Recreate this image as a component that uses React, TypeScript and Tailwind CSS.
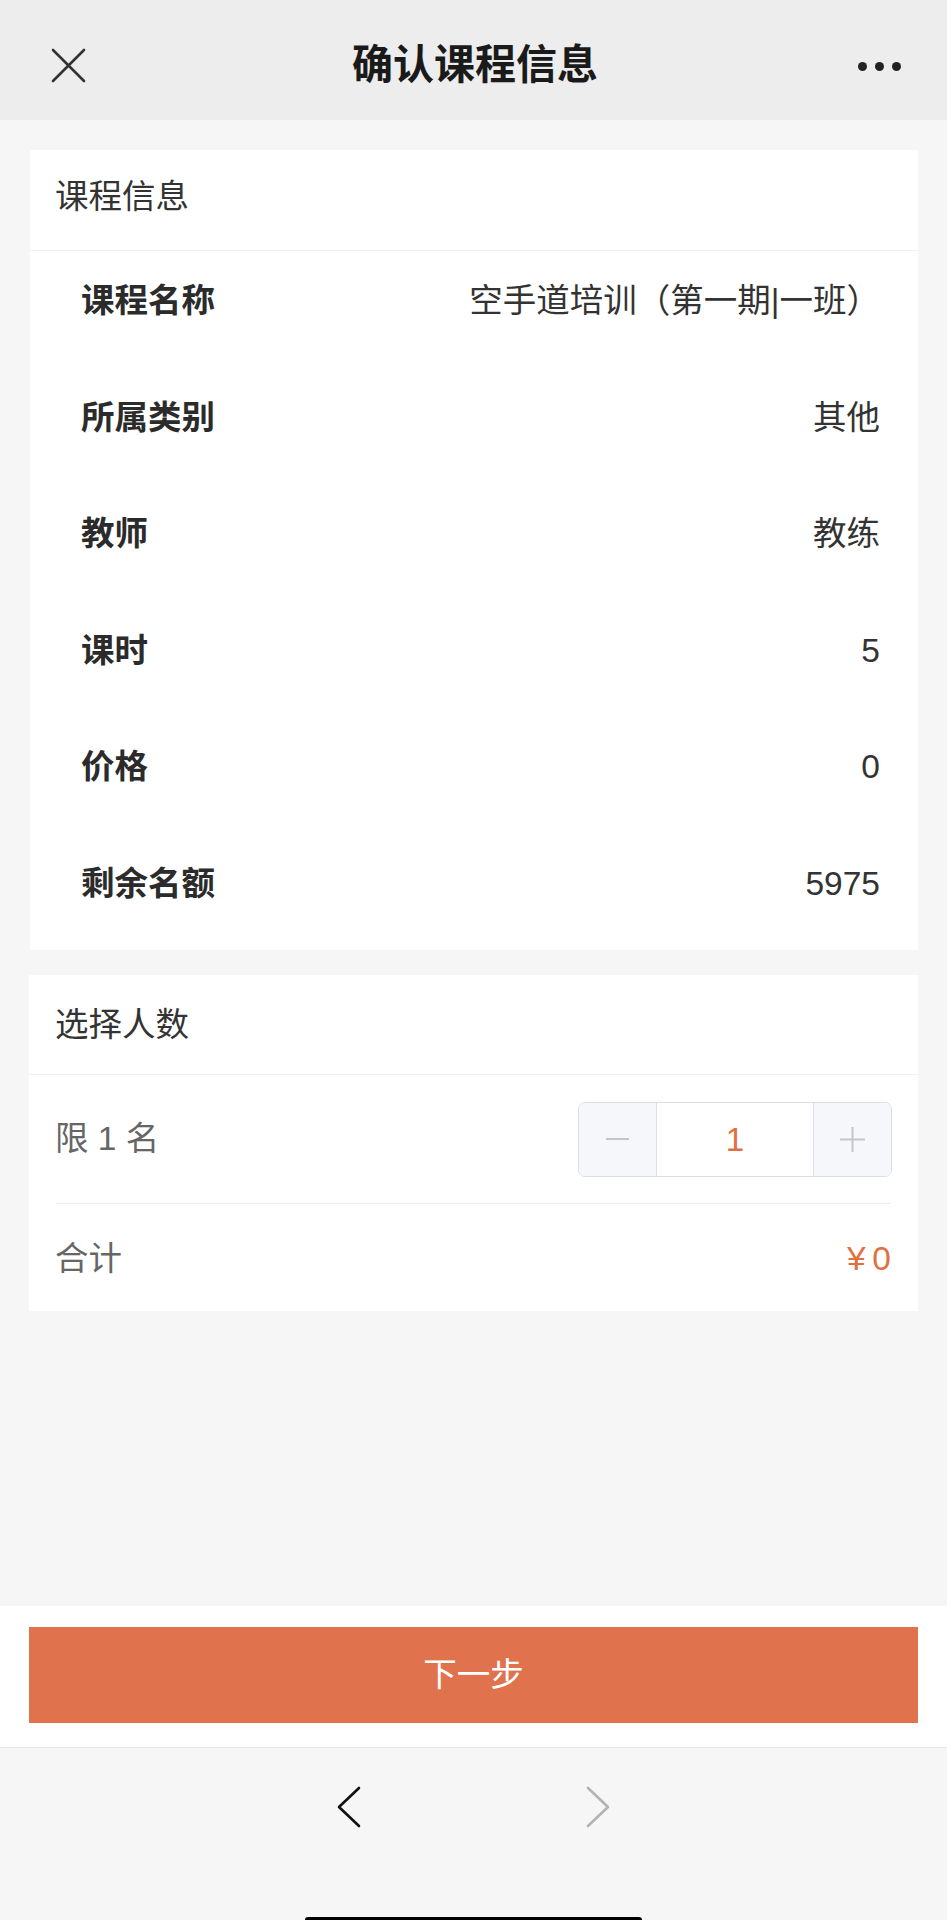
import React from "react";

const font = { fontFamily: '"Liberation Sans", "Noto Sans CJK SC", "Noto Sans", sans-serif' };

type Row = { label: string; value: string };

const rows: Row[] = [
  { label: "课程名称", value: "空手道培训（第一期|一班）" },
  { label: "所属类别", value: "其他" },
  { label: "教师", value: "教练" },
  { label: "课时", value: "5" },
  { label: "价格", value: "0" },
  { label: "剩余名额", value: "5975" },
];

const InfoRow: React.FC<Row> = ({ label, value }) => (
  <div className="flex h-[116.5px] items-start justify-between pl-[51px] pr-[38px] pt-[33px]">
    <span className="text-[33.5px] leading-[33px] font-bold text-[#2b2b2b]">{label}</span>
    <span className="text-[33.5px] leading-[33px] text-[#333333]">{value}</span>
  </div>
);

export default function App() {
  return (
    <div className="flex h-[1920px] w-full flex-col overflow-hidden bg-[#f6f6f6]" style={font}>
      {/* top bar */}
      <div className="flex h-[120px] shrink-0 items-center justify-between bg-[#ededed] pl-[51px] pr-[46px] pt-[11px]">
        <svg width="35" height="35" viewBox="0 0 35 35" className="text-[#333]">
          <path d="M2 2 L33 33 M33 2 L2 33" stroke="currentColor" strokeWidth="2.6" strokeLinecap="round" />
        </svg>
        <h1 className="ml-[6px] text-[41px] leading-none font-bold text-[#1a1a1a]">确认课程信息</h1>
        <div className="flex items-center gap-[8px] pt-[2px]">
          <span className="h-[9px] w-[9px] rounded-full bg-[#222]" />
          <span className="h-[9px] w-[9px] rounded-full bg-[#222]" />
          <span className="h-[9px] w-[9px] rounded-full bg-[#222]" />
        </div>
      </div>

      {/* content */}
      <div className="flex flex-1 flex-col gap-[25px] pt-[30px]">
        <div className="ml-[30px] mr-[29px] bg-white">
          <div className="flex h-[101px] items-center border-b border-[#f2f2f2] pl-[25px] pb-[6px]">
            <span className="text-[33.5px] leading-none text-[#333]">课程信息</span>
          </div>
          {rows.map((r) => (
            <InfoRow key={r.label} label={r.label} value={r.value} />
          ))}
        </div>

        <div className="ml-[29px] mr-[29px] bg-white">
          <div className="flex h-[100px] items-center border-b border-[#f2f2f2] pl-[26px]">
            <span className="text-[33.5px] leading-none text-[#333]">选择人数</span>
          </div>
          <div className="flex h-[128px] items-center justify-between pl-[26px] pr-[26px]">
            <span className="text-[33.5px] leading-none text-[#666]">限 1 名</span>
            <div className="flex h-[75px] w-[314px] overflow-hidden rounded-[7px] border border-[#dcdfe6]">
              <div className="flex w-[78px] items-center justify-center border-r border-[#dcdfe6] bg-[#f5f7fa]">
                <span className="h-[2px] w-[23px] bg-[#c3c5c9]" />
              </div>
              <div className="flex flex-1 items-center justify-center bg-white text-[33px] leading-none text-[#e0703f]">
                1
              </div>
              <div className="flex w-[78px] items-center justify-center border-l border-[#dcdfe6] bg-[#f5f7fa]">
                <svg width="25" height="25" viewBox="0 0 25 25">
                  <path d="M12.5 0 V25 M0 12.5 H25" stroke="#c3c5c9" strokeWidth="2" />
                </svg>
              </div>
            </div>
          </div>
          <div className="mx-[27px] h-px bg-[#eeeeee]" />
          <div className="flex h-[107px] items-center justify-between pl-[26px] pr-[27px] pt-[2px]">
            <span className="text-[33.5px] leading-none text-[#666]">合计</span>
            <span className="text-[33.5px] leading-none text-[#e0703f]">¥&thinsp;0</span>
          </div>
        </div>
      </div>

      {/* bottom action */}
      <div className="shrink-0 bg-white pt-[21px] pb-[24px]">
        <button className="ml-[29px] mr-[29px] flex h-[96px] w-[889px] items-center justify-center bg-[#e0734e] text-[33.5px] leading-none text-white">
          下一步
        </button>
      </div>

      {/* browser toolbar */}
      <div className="flex h-[173px] shrink-0 flex-col border-t border-[#e6e6e6] bg-[#f6f6f6]">
        <div className="flex h-[120px] items-center justify-center gap-[223px] pb-[2px]">
          <svg width="26" height="42" viewBox="0 0 26 42">
            <path d="M23 2 L3 21 L23 40" fill="none" stroke="#111" strokeWidth="2.6" strokeLinecap="round" strokeLinejoin="round" />
          </svg>
          <svg width="26" height="42" viewBox="0 0 26 42">
            <path d="M3 2 L23 21 L3 40" fill="none" stroke="#b3b3b3" strokeWidth="2.6" strokeLinecap="round" strokeLinejoin="round" />
          </svg>
        </div>
        <div className="flex-1" />
        <div className="mx-auto h-[3px] w-[337px] rounded-t-full bg-black" />
      </div>
    </div>
  );
}
